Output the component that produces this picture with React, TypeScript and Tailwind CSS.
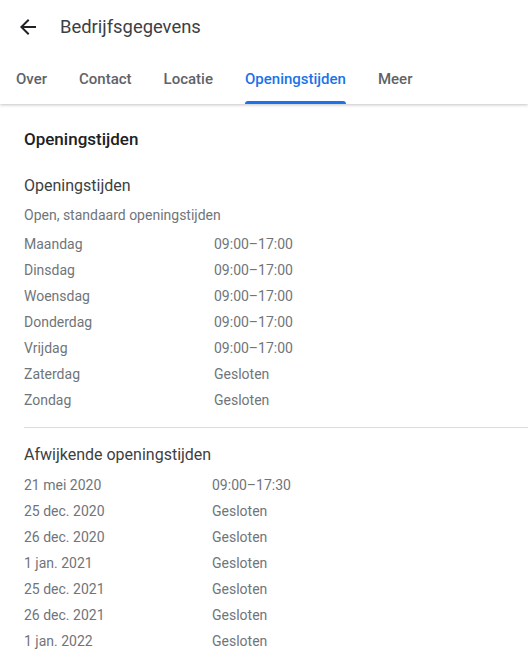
import React from "react";

const tabs = ["Over", "Contact", "Locatie", "Openingstijden", "Meer"];

const week: [string, string][] = [
  ["Maandag", "09:00–17:00"],
  ["Dinsdag", "09:00–17:00"],
  ["Woensdag", "09:00–17:00"],
  ["Donderdag", "09:00–17:00"],
  ["Vrijdag", "09:00–17:00"],
  ["Zaterdag", "Gesloten"],
  ["Zondag", "Gesloten"],
];

const special: [string, string][] = [
  ["21 mei 2020", "09:00–17:30"],
  ["25 dec. 2020", "Gesloten"],
  ["26 dec. 2020", "Gesloten"],
  ["1 jan. 2021", "Gesloten"],
  ["25 dec. 2021", "Gesloten"],
  ["26 dec. 2021", "Gesloten"],
  ["1 jan. 2022", "Gesloten"],
];

interface IRow {
  label: string;
  value: string;
  col: string;
}

const HoursRow: React.FC<IRow> = ({ label, value, col }) => {
  return (
    <div className="flex h-[26px] items-center text-[14px] text-[#70757a]">
      <span className={col}>{label}</span>
      <span>{value}</span>
    </div>
  );
};

export default function App() {
  return (
    <div
      className="min-h-screen w-[528px] overflow-hidden bg-white"
      style={{ fontFamily: "Roboto, Arial, sans-serif" }}
    >
      <div className="relative z-10 bg-white shadow-[0_1px_3px_rgba(60,64,67,0.3)]">
        <div className="flex h-[54px] items-center">
          <div className="ml-4 flex h-6 w-6 items-center justify-center text-[#202124]">
            <svg width="24" height="24" viewBox="0 0 24 24" fill="currentColor">
              <path d="M20 11H7.83l5.59-5.59L12 4l-8 8 8 8 1.41-1.41L7.83 13H20v-2z" />
            </svg>
          </div>
          <span className="ml-5 text-[18.4px] text-[#3c4043]">Bedrijfsgegevens</span>
        </div>
        <div className="flex h-[50px]">
          {tabs.map((t) => {
            const active = t === "Openingstijden";
            return (
              <div key={t} className="relative flex h-full items-center px-4">
                <span
                  className={`text-[15px] font-medium ${
                    active ? "text-[#1a73e8]" : "text-[#5f6368]"
                  }`}
                >
                  {t}
                </span>
                {active && (
                  <div className="absolute bottom-0 left-4 right-4 h-[3px] rounded-t-[3px] bg-[#1a73e8]" />
                )}
              </div>
            );
          })}
        </div>
      </div>

      <div className="pl-6">
        <div className="mt-[26px] flex h-5 items-center text-[17px] font-medium text-[#202124]">
          Openingstijden
        </div>

        <div className="mt-[24px] flex h-6 items-center text-[16px] text-[#3c4043]">
          Openingstijden
        </div>
        <div className="mt-[7px] flex h-5 items-center text-[14px] text-[#70757a]">
          Open, standaard openingstijden
        </div>
        <div className="mt-[6px]">
          {week.map(([d, h]) => (
            <HoursRow key={d} label={d} value={h} col="w-[190px]" />
          ))}
        </div>

        <div className="mt-[14px] h-px bg-[#dadce0]" />

        <div className="mt-[15px] flex h-6 items-center text-[16px] text-[#3c4043]">
          Afwijkende openingstijden
        </div>
        <div className="mt-[5px]">
          {special.map(([d, h]) => (
            <HoursRow key={d} label={d} value={h} col="w-[188px]" />
          ))}
        </div>
      </div>
    </div>
  );
}
